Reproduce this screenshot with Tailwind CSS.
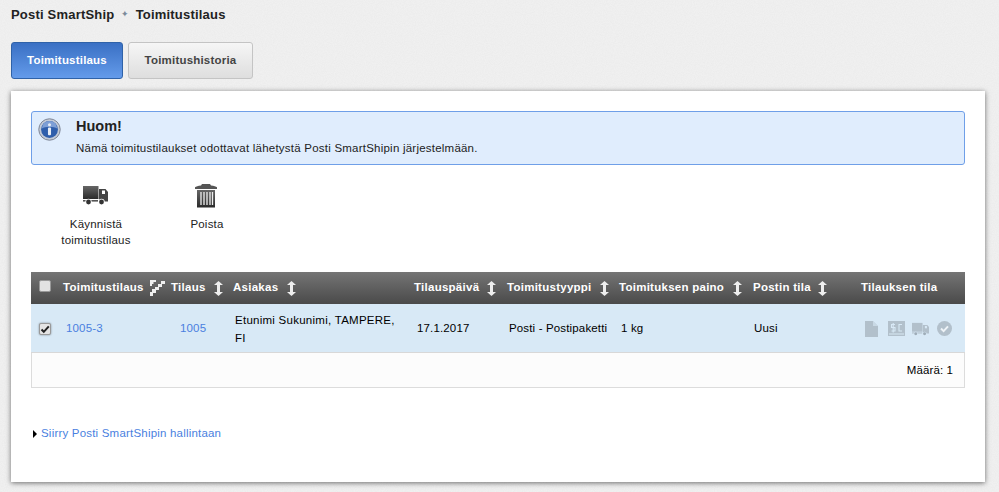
<!DOCTYPE html>
<html lang="fi">
 <head>
  <meta charset="utf-8"/>
  <title>Posti SmartShip</title>
  <script src="https://cdn.jsdelivr.net/npm/@tailwindcss/browser@4"></script>
 </head>
 <body class="relative h-[492px] w-[999px] overflow-hidden bg-[#f0f0f0] font-['Liberation_Sans',Arial,sans-serif] text-[12px] text-black">
  <svg class="absolute inset-0 h-full w-full" aria-hidden="true">
   <filter id="grain"><feTurbulence type="fractalNoise" baseFrequency="0.9" numOctaves="2"/><feColorMatrix values="0 0 0 0 0.5  0 0 0 0 0.5  0 0 0 0 0.5  0.5 0 0 0 -0.15"/></filter>
   <rect width="100%" height="100%" filter="url(#grain)" opacity="0.3"/>
  </svg>
  <div class="relative">
  <div class="flex h-[30px] items-center gap-[7px] pl-[11px] text-[13px] font-bold tracking-[0.2px] text-[#222]">
   <span>Posti SmartShip</span>
   <span class="text-[9px] font-normal text-[#7a8a9a]">✦</span>
   <span class="ml-[-1px]">Toimitustilaus</span>
  </div>
  <div class="mt-[12px] flex gap-[5px] pl-[11px]">
   <a class="flex h-[37px] w-[112px] items-center justify-center rounded-[3px] border border-[#2f62a8] bg-gradient-to-b from-[#3a70c4] to-[#649bea] text-[11.5px] font-bold tracking-[0.2px] text-white">Toimitustilaus</a>
   <a class="flex h-[37px] w-[125px] items-center justify-center rounded-[3px] border border-[#c4c4c4] bg-gradient-to-b from-[#f6f6f6] to-[#dedede] text-[11.5px] font-bold tracking-[0.2px] text-[#444]">Toimitushistoria</a>
  </div>
  <main class="ml-[11px] mt-[12px] h-[391px] w-[974px] bg-white px-[20px] pt-[20px] shadow-[0_1px_5px_rgba(0,0,0,0.55)]">
   <div class="flex h-[54px] rounded-[3px] border border-[#6f9fe8] bg-[#e0edfd]">
    <svg class="ml-[6px] mt-[6px] h-[23px] w-[23px]" viewBox="0 0 24 24">
     <circle cx="12" cy="12" r="11.2" fill="#c3cad6" stroke="#7b8494" stroke-width="1"/>
     <circle cx="12" cy="12" r="8.8" fill="#2f5eab"/>
     <path d="M4 11a8 8 0 0 1 16 0c-3-2-13-2-16 0z" fill="#7e9fd6"/>
     <circle cx="12" cy="7" r="1.6" fill="#e8edf5"/>
     <rect x="10.4" y="10" width="3.2" height="8" rx="1" fill="#e8edf5"/>
    </svg>
    <div class="ml-[15px]">
     <div class="mt-[4px] text-[14.5px] font-bold leading-[20px] text-[#222]">Huom!</div>
     <div class="mt-[4px] text-[11.5px] leading-[16px] tracking-[0.225px] text-[#222]">Nämä toimitustilaukset odottavat lähetystä Posti SmartShipin järjestelmään.</div>
    </div>
   </div>
   <div class="mt-[20px] flex h-[87px] text-center text-[11.5px] leading-[16px] tracking-[0.2px] text-[#222]">
    <div class="w-[130px]">
     <svg class="ml-[52px] h-[20px] w-[25px]" viewBox="0 0 25 20">
      <defs><linearGradient id="dark" x1="0" y1="0" x2="0" y2="1"><stop offset="0" stop-color="#666"/><stop offset="1" stop-color="#2a2a2a"/></linearGradient></defs>
      <rect x="0" y="1" width="15.5" height="13" fill="url(#dark)"/>
      <rect x="0" y="15" width="15" height="1.6" fill="#555"/>
      <path d="M16 4h6.5l2.5 3v9.6h-9z" fill="#444"/>
      <rect x="19" y="5.5" width="3" height="3.5" fill="#fff"/>
      <circle cx="5.5" cy="17" r="3.2" fill="#fff"/><circle cx="5.5" cy="17" r="2.4" fill="#333"/>
      <circle cx="18.5" cy="17" r="3.2" fill="#fff"/><circle cx="18.5" cy="17" r="2.4" fill="#333"/>
     </svg>
     <div class="mt-[11px]">Käynnistä<br/>toimitustilaus</div>
    </div>
    <div class="w-[92px]">
     <svg class="ml-[33px] mt-[-2px] h-[25px] w-[24px]" viewBox="0 0 24 25">
      <path d="M8 1h8l1 1.500c3 .3 5 .8 6 1.800V6H1V4.300c1-1 3-1.500 6-1.800z" fill="#555"/>
      <path d="M3 7h18v17.500H3z" fill="url(#dark)"/>
      <path d="M7 9v13M10 9v13M13 9v13M16 9v13M18.500 9v13" stroke="#eee" stroke-width="1.300"/>
     </svg>
     <div class="mt-[8px]">Poista</div>
    </div>
   </div>
   <table class="w-[934px] table-fixed border-separate border-spacing-0 text-[11.5px] tracking-[0.15px]">
    <colgroup>
     <col class="w-[32px]"/><col class="w-[108px]"/><col class="w-[62px]"/><col class="w-[181px]"/><col class="w-[93px]"/><col class="w-[112px]"/><col class="w-[134px]"/><col class="w-[108px]"/><col class="w-[104px]"/>
    </colgroup>
    <thead>
     <tr class="h-[32px] bg-gradient-to-b from-[#757575] to-[#4a4a4a] text-left font-bold tracking-[0.26px] text-white">
      <th class="pl-[8px]"><span class="mb-[5px] block h-[12px] w-[12px] rounded-[2px] border border-[#999] bg-[#e2e2e2]"></span></th>
      <th>
       <div class="flex items-center gap-[4px]">Toimitustilaus
        <svg class="h-[16px] w-[17px]" viewBox="0 0 17 16" fill="#eee"><path d="M2 0h6v2H5.500v2H4v2H2zM17 1v3h-3v3h-3v3H8v3H5v3H2v-4h2v-3h3V7h3V4h3V1z"/></svg>
       </div>
      </th>
      <th><div class="flex items-center gap-[8px]">Tilaus<svg class="h-[15px] w-[9px]" viewBox="0 0 9 15" fill="#eee"><path d="M4.500 0L9 4H6v7h3l-4.500 4L0 11h3V4H0z"/></svg></div></th>
      <th><div class="flex items-center gap-[9px]">Asiakas<svg class="h-[15px] w-[9px]" viewBox="0 0 9 15" fill="#eee"><path d="M4.500 0L9 4H6v7h3l-4.500 4L0 11h3V4H0z"/></svg></div></th>
      <th><div class="flex items-center gap-[8px]">Tilauspäivä<svg class="h-[15px] w-[9px]" viewBox="0 0 9 15" fill="#eee"><path d="M4.500 0L9 4H6v7h3l-4.500 4L0 11h3V4H0z"/></svg></div></th>
      <th><div class="flex items-center gap-[8px]">Toimitustyyppi<svg class="h-[15px] w-[9px]" viewBox="0 0 9 15" fill="#eee"><path d="M4.500 0L9 4H6v7h3l-4.500 4L0 11h3V4H0z"/></svg></div></th>
      <th><div class="flex items-center gap-[9px]">Toimituksen paino<svg class="h-[15px] w-[9px]" viewBox="0 0 9 15" fill="#eee"><path d="M4.500 0L9 4H6v7h3l-4.500 4L0 11h3V4H0z"/></svg></div></th>
      <th><div class="flex items-center gap-[7px]">Postin tila<svg class="h-[15px] w-[9px]" viewBox="0 0 9 15" fill="#eee"><path d="M4.500 0L9 4H6v7h3l-4.500 4L0 11h3V4H0z"/></svg></div></th>
      <th>Tilauksen tila</th>
     </tr>
    </thead>
    <tbody>
     <tr class="h-[49px] bg-[#d8e9f6] [&>td]:border-b [&>td]:border-[#d8d8d8] [&>td]:pt-[1px]">
      <td class="pl-[8px]">
       <span class="block h-[12px] w-[12px] rounded-[2px] border border-[#999] bg-[#e4e4e4] shadow-[0_0_2px_rgba(0,0,0,0.45)]">
        <svg class="h-[10px] w-[10px]" viewBox="0 0 10 10"><path d="M1.500 5.500l2.300 2.300L8.800 2.300" stroke="#222" stroke-width="2" fill="none"/></svg>
       </span>
      </td>
      <td class="pl-[3px] text-[#4a7fe0]">1005-3</td>
      <td class="pl-[9px] text-[#4a7fe0]">1005</td>
      <td class="pl-[2px] leading-[18px] tracking-[0.26px]">Etunimi Sukunimi, TAMPERE,<br/>FI</td>
      <td class="pl-[3px]">17.1.2017</td>
      <td class="pl-[2px]">Posti - Postipaketti</td>
      <td class="pl-[2px]">1 kg</td>
      <td class="pl-[1px]">Uusi</td>
      <td>
       <div class="ml-[4px] flex items-center">
        <svg class="h-[16px] w-[13px]" viewBox="0 0 13 16" fill="#b2c0cb"><path d="M0 0h8l5 5v11H0z"/><path d="M8 0v5h5z" fill="#d8e9f6" opacity=".6"/></svg>
        <svg class="ml-[10px] h-[15px] w-[17px]" viewBox="0 0 17 15" fill="#b2c0cb"><path d="M0 0h17v15H0z"/><path d="M7 3.500H3.500v3H7v3.500H3.500M5.200 2v9.500M14 3.500h-3v6.500h3M1 13h15" stroke="#d8e9f6" stroke-width="1.100" fill="none"/></svg>
        <svg class="ml-[7px] h-[14px] w-[17px]" viewBox="0 0 25 20"><rect y="1" width="15.500" height="13" fill="#b2c0cb"/><rect y="15" width="15" height="1.600" fill="#b2c0cb"/><path d="M16 4h6.500l2.500 3v9.600h-9z" fill="#b2c0cb"/><rect x="19" y="5.500" width="3" height="3.500" fill="#d8e9f6"/><circle cx="5.500" cy="17" r="3" fill="#d8e9f6"/><circle cx="5.500" cy="17" r="2.200" fill="#9fadb8"/><circle cx="18.500" cy="17" r="3" fill="#d8e9f6"/><circle cx="18.500" cy="17" r="2.200" fill="#9fadb8"/></svg>
        <svg class="ml-[8px] h-[15px] w-[15px]" viewBox="0 0 15 15"><circle cx="7.500" cy="7.500" r="7.500" fill="#b2c0cb"/><path d="M4 7.500l2.600 2.600L11 5.400" stroke="#eef3f7" stroke-width="2" fill="none"/></svg>
       </div>
      </td>
     </tr>
     <tr class="h-[35px]">
      <td class="border-x border-b border-[#dcdcdc] bg-[#fcfcfc] pr-[11px] pt-[1px] text-right tracking-[0.1px]" colspan="9">Määrä: 1</td>
     </tr>
    </tbody>
   </table>
   <div class="mt-[37px] flex items-center gap-[4px] text-[11.5px] tracking-[0.2px] text-[#4a7fe0]">
    <span class="ml-[2px] h-0 w-0 border-y-[4px] border-l-[4px] border-y-transparent border-l-black"></span>
    <a>Siirry Posti SmartShipin hallintaan</a>
   </div>
  </main>
  </div>
 </body>
</html>
